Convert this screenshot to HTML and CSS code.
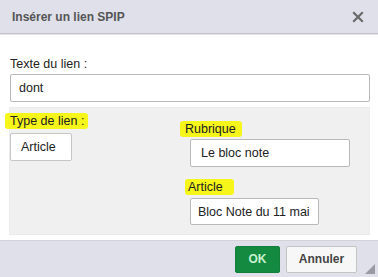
FILE: index.html
```html
<!DOCTYPE html>
<html lang="fr">
<head>
  <meta charset="UTF-8">
  <title>Insérer un lien SPIP</title>
  <link rel="stylesheet" href="styles.css">
</head>
<body>

<div class="dialog">
  <div class="dialog-head">
    <span class="dialog-title">Insérer un lien SPIP</span>
    <svg class="close" width="12" height="12" viewBox="0 0 12 12">
      <path d="M2 2 L10 10 M10 2 L2 10" stroke="#6a6a6a" stroke-width="2.2" stroke-linecap="square"/>
    </svg>
  </div>

  <div class="dialog-body">
    <label class="field-label">Texte du lien :</label>
    <div class="input wide">dont</div>

    <div class="panel">
      <div class="col-left">
        <span class="mark mark-type">Type de lien :</span>
        <div class="input select">Article</div>
      </div>
      <div class="col-right">
        <span class="mark mark-rub">Rubrique</span>
        <div class="input rub">Le bloc note</div>
        <span class="mark mark-art">Article</span>
        <div class="input art">Bloc Note du 11 mai</div>
      </div>
    </div>
  </div>

  <div class="dialog-foot">
    <button class="btn ok">OK</button>
    <button class="btn cancel">Annuler</button>
    <svg class="grip" width="10" height="10" viewBox="0 0 10 10">
      <path d="M10 0 L10 10 L0 10 Z" fill="#9a9aa2"/>
    </svg>
  </div>
</div>

</body>
</html>
```

FILE: styles.css
```css
html, body {
  margin: 0;
  background: #fff;
  font-family: Arial, "Liberation Sans", sans-serif;
  font-size: 12.5px;
  color: #222;
}
.dialog {
  width: 378px;
  height: 277px;
  display: flex;
  flex-direction: column;
  overflow: hidden;
}
.dialog-head {
  height: 33px;
  background: #dfe0e9;
  border-bottom: 1px solid #c3c3c8;
  box-shadow: 0 1px 0 #e6e6ea;
  display: flex;
  align-items: center;
  justify-content: space-between;
  padding: 0 14px 0 12px;
  flex-shrink: 0;
}
.dialog-title {
  font-weight: bold;
  font-size: 12px;
  color: #555;
}
.close {
  display: block;
}
.dialog-body {
  flex: 1;
  padding: 23px 8px 0 9px;
}
.field-label {
  display: block;
  line-height: 15px;
  margin-left: 1px;
  margin-bottom: 2px;
}
.input {
  background: #fff;
  border: 1px solid #b9b9b9;
  border-radius: 2px;
  box-sizing: border-box;
  height: 28px;
  line-height: 26px;
  padding: 0 8px;
  white-space: nowrap;
}
.input.wide {
  margin-left: 1px;
}
.panel {
  margin-top: 5px;
  height: 128px;
  box-sizing: border-box;
  background: #f0f0f0;
  border: 1px solid #ececec;
  display: grid;
  grid-template-columns: 176px 1fr;
}
.col-left {
  padding: 5px 0 0 0;
}
.col-right {
  padding: 13px 0 0 0;
}
.mark {
  display: inline-block;
  background: #f6f61a;
  line-height: 16px;
  border-radius: 3px;
  color: #222;
}
.mark-type {
  margin-left: -5px;
  padding: 0 4px 0 5px;
}
.mark-rub {
  margin-left: -6px;
  padding: 0 6px 0 5px;
}
.mark-art {
  margin-top: 12px;
  margin-left: -1px;
  padding: 0 11px 0 3px;
}
.select {
  width: 62px;
  margin-top: 4px;
  padding: 0 10px;
  border-color: #c6c6c6;
}
.rub {
  width: 160px;
  margin: 2px 0 0 4px;
  padding: 0 10px;
}
.art {
  width: 129px;
  margin: 3px 0 0 4px;
  padding: 0 7px;
  height: 27px;
}
.dialog-foot {
  height: 37px;
  background: #dfe0e9;
  border-top: 1px solid #d2d2d8;
  box-sizing: border-box;
  display: flex;
  align-items: center;
  justify-content: flex-end;
  gap: 6px;
  padding: 0 3px 0 0;
  margin-top: 5px;
}
.btn {
  font-family: Arial, "Liberation Sans", sans-serif;
  font-weight: bold;
  font-size: 12px;
  height: 27px;
  border-radius: 2px;
  cursor: pointer;
}
.ok {
  width: 45px;
  background: #138a3f;
  color: #c8f0d0;
  border: 1px solid #127f3a;
}
.cancel {
  width: 71px;
  background: #f7f7f7;
  color: #444;
  border: 1px solid #c4c4c4;
}
.grip {
  align-self: flex-end;
  margin-bottom: 3px;
  margin-left: 2px;
}
```
